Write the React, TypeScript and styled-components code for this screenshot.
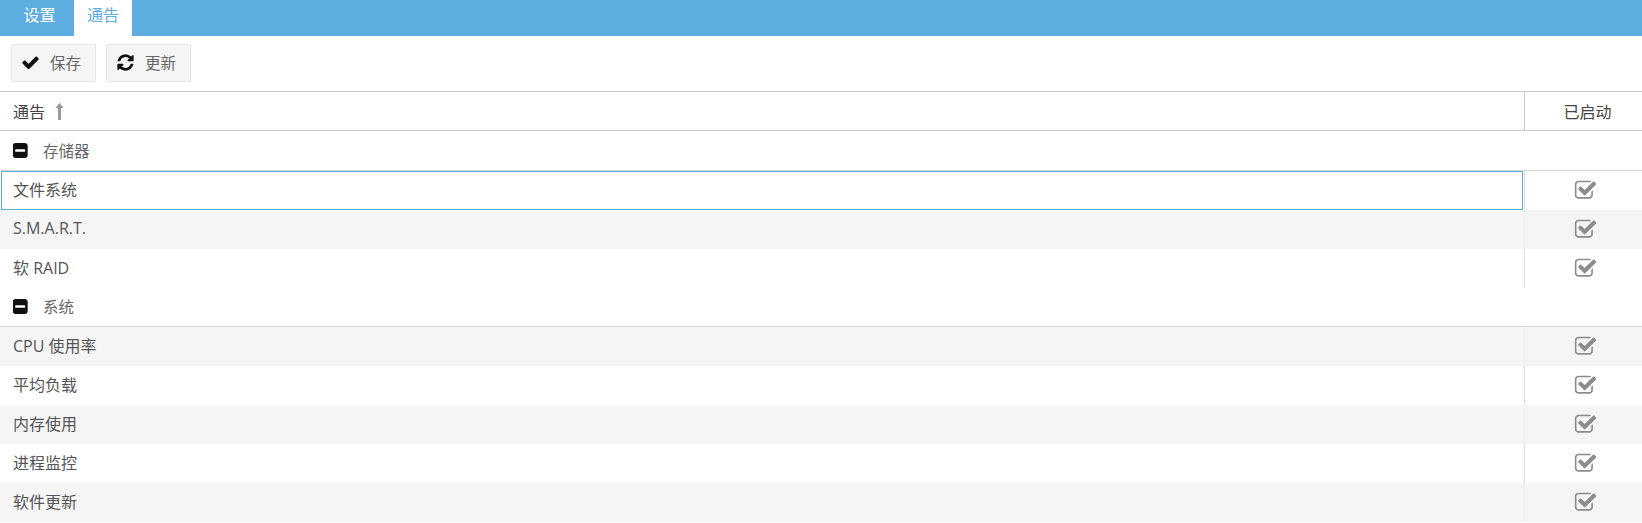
import React from 'react'
import styled, { createGlobalStyle } from 'styled-components'

const GlobalStyle = createGlobalStyle`
  html, body {
    margin: 0;
    padding: 0;
    background: #fff;
    font-family: 'Open Sans', 'Noto Sans CJK SC', sans-serif;
    font-size: 16px;
    color: #555;
  }
`

const TabBar = styled('div')`
  display: flex;
  height: 36px;
  background: #5dade0;
`
const Tab = styled('div')<{ $active?: boolean }>`
  display: flex;
  align-items: center;
  justify-content: center;
  width: ${({ $active }) => ($active ? '58px' : '74px')};
  padding: 0 0 8px ${({ $active }) => ($active ? '0' : '5px')};
  box-sizing: border-box;
  font-size: 16px;
  color: ${({ $active }) => ($active ? '#5dade0' : '#fff')};
  background: ${({ $active }) => ($active ? '#fff' : 'transparent')};
`

const Toolbar = styled('div')`
  display: flex;
  gap: 10px;
  height: 56px;
  padding: 8px 11px 0;
  box-sizing: border-box;
  border-bottom: 1px solid #ccc;
`
const Button = styled('div')`
  display: flex;
  align-items: center;
  height: 38px;
  width: 85px;
  padding: 0 0 2px 9px;
  box-sizing: border-box;
  background: #f5f5f5;
  border: 1px solid #e7e7e7;
  border-radius: 2px;
  font-size: 15.5px;
  color: #666;
  svg {
    width: 19px;
    height: 19px;
    margin-right: 10px;
    fill: #111;
    flex: none;
  }
`

const HeaderRow = styled('div')`
  display: flex;
  height: 39px;
  border-bottom: 1px solid #ccc;
  box-sizing: border-box;
  color: #444;
`
const HeaderName = styled('div')`
  flex: 1;
  display: flex;
  align-items: center;
  padding-left: 13px;
  svg {
    width: 9px;
    height: 17px;
    margin-left: 10px;
    fill: #999;
  }
`
const HeaderEnabled = styled('div')`
  width: 118px;
  display: flex;
  align-items: center;
  justify-content: center;
  box-sizing: border-box;
  padding-left: 8px;
  border-left: 1px solid #ccc;
`

const GroupRow = styled('div')<{ $short?: boolean }>`
  display: flex;
  align-items: center;
  height: ${({ $short }) => ($short ? '39px' : '40px')};
  padding: 0 0 ${({ $short }) => ($short ? '2px' : '1px')} 13px;
  box-sizing: border-box;
  border-bottom: 1px solid #d4d4d4;
  color: #666;
  font-size: 15.5px;
  svg {
    width: 15px;
    height: 15px;
    margin-right: 15px;
    fill: #111;
  }
`

const Row = styled('div')<{ $odd?: boolean }>`
  display: flex;
  height: 39px;
  background: ${({ $odd }) => ($odd ? '#f5f5f5' : '#fff')};
  color: #555;
`
const NameCell = styled('div')<{ $focused?: boolean }>`
  flex: 1;
  display: flex;
  align-items: center;
  box-sizing: border-box;
  padding-bottom: 3px;
  outline: ${({ $focused }) => ($focused ? '1px solid #5dade0' : 'none')};
  outline-offset: -1px;
  margin: ${({ $focused }) => ($focused ? '0 1px' : '0')};
  padding-left: ${({ $focused }) => ($focused ? '12px' : '13px')};
`
const CheckCell = styled('div')<{ $odd?: boolean }>`
  width: 118px;
  display: flex;
  align-items: center;
  justify-content: center;
  box-sizing: border-box;
  padding: 0 0 0 3px;
  border-left: 1px solid ${({ $odd }) => ($odd ? '#eee' : '#ddd')};
  svg {
    width: 23px;
    height: 23px;
    fill: #8c8c8c;
  }
`

const CheckIcon = () => (
  <svg viewBox="0 0 1792 1792">
    <path d="M1671 566q0 40-28 68l-724 724-136 136q-28 28-68 28t-68-28l-136-136-362-362q-28-28-28-68t28-68l136-136q28-28 68-28t68 28l294 295 656-657q28-28 68-28t68 28l136 136q28 28 28 68z" />
  </svg>
)
const RefreshIcon = () => (
  <svg viewBox="0 0 1792 1792">
    <path d="M1639 1056q0 5-1 7-64 268-268 434.5t-478 166.5q-146 0-282.5-55t-243.5-157l-129 129q-19 19-45 19t-45-19-19-45v-448q0-26 19-45t45-19h448q26 0 45 19t19 45-19 45l-137 137q71 66 161 102t187 36q134 0 250-65t186-179q11-17 53-117 8-23 30-23h192q13 0 22.5 9.5t9.5 22.5zm25-800v448q0 26-19 45t-45 19h-448q-26 0-45-19t-19-45 19-45l138-138q-148-137-349-137-134 0-250 65t-186 179q-11 17-53 117-8 23-30 23h-199q-13 0-22.5-9.5t-9.5-22.5v-7q65-268 270-434.5t480-166.5q146 0 284 55.5t245 156.5l130-129q19-19 45-19t45 19 19 45z" />
  </svg>
)
const MinusSquareIcon = () => (
  <svg viewBox="192 128 1472 1536">
    <path d="M1408 960v-128q0-26-19-45t-45-19h-896q-26 0-45 19t-19 45v128q0 26 19 45t45 19h896q26 0 45-19t19-45zm256-544v960q0 119-84.5 203.5t-203.5 84.5h-960q-119 0-203.5-84.5t-84.5-203.5v-960q0-119 84.5-203.5t203.5-84.5h960q119 0 203.5 84.5t84.5 203.5z" />
  </svg>
)
const CheckSquareIcon = () => (
  <svg viewBox="0 0 1792 1792">
    <path d="M1472 930v318q0 119-84.5 203.5t-203.5 84.5h-832q-119 0-203.5-84.5t-84.5-203.5v-832q0-119 84.5-203.5t203.5-84.5h832q63 0 117 25 15 7 18 23 3 17-9 29l-49 49q-10 10-23 10-3 0-9-2-23-6-45-6h-832q-66 0-113 47t-47 113v832q0 66 47 113t113 47h832q66 0 113-47t47-113v-254q0-13 9-22l64-64q10-10 23-10 6 0 12 3 20 8 20 29zm231-489l-814 814q-24 24-57 24t-57-24l-430-430q-24-24-24-57t24-57l110-110q24-24 57-24t57 24l263 263 647-647q24-24 57-24t57 24l110 110q24 24 24 57t-24 57z" />
  </svg>
)
const ArrowUpIcon = () => (
  <svg viewBox="0 0 9 17">
    <path d="M4.5 0 L8.5 5 H6 V17 H3 V5 H0.5 Z" />
  </svg>
)

const groups = [
  {
    name: '存储器',
    items: ['文件系统', 'S.M.A.R.T.', '软 RAID'],
  },
  {
    name: '系统',
    items: ['CPU 使用率', '平均负载', '内存使用', '进程监控', '软件更新'],
  },
]

function App() {
  return (
    <>
      <GlobalStyle />
      <TabBar>
        <Tab>设置</Tab>
        <Tab $active>通告</Tab>
      </TabBar>
      <Toolbar>
        <Button>
          <CheckIcon />
          保存
        </Button>
        <Button>
          <RefreshIcon />
          更新
        </Button>
      </Toolbar>
      <HeaderRow>
        <HeaderName>
          通告
          <ArrowUpIcon />
        </HeaderName>
        <HeaderEnabled>已启动</HeaderEnabled>
      </HeaderRow>
      {groups.map((group, g) => (
        <div key={group.name}>
          <GroupRow $short={g === 1}>
            <MinusSquareIcon />
            {group.name}
          </GroupRow>
          {group.items.map((item, i) => {
            const odd = g === 0 ? i % 2 === 1 : i % 2 === 0
            return (
              <Row key={item} $odd={odd}>
                <NameCell $focused={item === '文件系统'}>{item}</NameCell>
                <CheckCell $odd={odd}>
                  <CheckSquareIcon />
                </CheckCell>
              </Row>
            )
          })}
        </div>
      ))}
    </>
  )
}

export default App
